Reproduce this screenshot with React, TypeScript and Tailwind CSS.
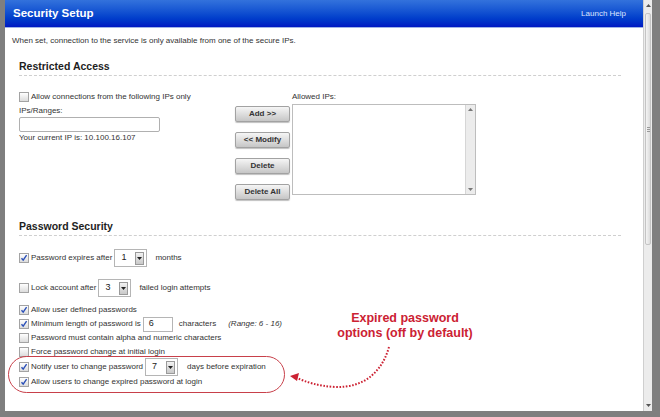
import React from "react";

const font = "font-['Liberation_Sans',Arial,sans-serif]";

function Check({checked}: {checked?: boolean}) {
  return (
    <span className="relative flex h-[10px] w-[10px] shrink-0 items-center justify-center border border-[#a3a3a3] bg-linear-to-b from-[#ffffff] to-[#dcdcdc]">
      {checked && (
        <svg width="8" height="8" viewBox="0 0 8 8" className="absolute">
          <path d="M1.5 4.2 L3.2 6.2 L6.6 1.2" fill="none" stroke="#2a4fb8" strokeWidth="1.4" />
        </svg>
      )}
    </span>
  );
}

function Select({value, w = 33}: {value: string; w?: number}) {
  return (
    <span
      className="flex h-[18px] items-center justify-between border border-[#b5b5b5] bg-white pl-[6px] pr-[2px] text-[9px] text-[#222]"
      style={{width: w}}>
      {value}
      <span className="flex h-[13px] w-[9px] items-center justify-center border border-[#9a9a9a] bg-linear-to-b from-[#f2f2f2] to-[#c9c9c9]">
        <svg width="5" height="3" viewBox="0 0 5 3">
          <path d="M0 0 H5 L2.5 3 Z" fill="#222" />
        </svg>
      </span>
    </span>
  );
}

function Row({checked, h = 14, children}: {checked?: boolean; h?: number; children: React.ReactNode}) {
  return (
    <div className="flex items-center" style={{height: h}}>
      <Check checked={checked} />
      <div className="ml-[2px] flex items-center">{children}</div>
    </div>
  );
}

function Btn({label}: {label: string}) {
  return (
    <button className="h-[16px] w-[55px] rounded-[2px] border border-[#a2a2a2] bg-linear-to-b from-[#f6f6f6] to-[#c6c6c6] text-[8px] font-bold text-[#333] shadow-[0_1px_1px_rgba(0,0,0,0.25)]">
      {label}
    </button>
  );
}

function Heading({children}: {children: React.ReactNode}) {
  return (
    <div className="flex h-[16px] items-center border-b border-dashed border-[#cfcfcf] pb-[2px] text-[10.5px] font-bold text-[#1e1e1e]">
      {children}
    </div>
  );
}

export default function App() {
  return (
    <div className={`${font} relative flex h-[417px] w-[660px] overflow-hidden bg-[#7f7f7f] pb-[6px] pl-[5px] pr-[8px] text-[8px] text-[#333]`}>
      <div className="flex w-[638px] flex-col">
        <div className="flex h-[28px] items-center justify-between border-b border-[#9fb3e6] bg-linear-to-b from-[#3372dc] to-[#0016c2] pl-[8px] pr-[17px]">
          <span className="text-[11.5px] font-bold text-white">Security Setup</span>
          <span className="text-[8px] text-[#dde6ff]">Launch Help</span>
        </div>

        <div className="flex-1 bg-white">
          <div className="ml-[7px] mt-[6px] flex h-[14px] items-center">
            When set, connection to the service is only available from one of the secure IPs.
          </div>

          <div className="ml-[14px] mr-[22px]">
            <div className="mt-[12px]">
              <Heading>Restricted Access</Heading>
            </div>

            <div className="mt-[14px] flex">
              <div className="w-[216px]">
                <Row>Allow connections from the following IPs only</Row>
                <div className="mt-[1px] flex h-[12px] items-center">IPs/Ranges:</div>
                <div className="h-[15px] w-[141px] rounded-[2px] border border-[#b0b0b0] bg-white" />
                <div className="flex h-[12px] items-center">Your current IP is: 10.100.16.107</div>
              </div>

              <div className="mt-[16px] flex flex-col gap-[10px]">
                <Btn label="Add >>" />
                <Btn label="<< Modify" />
                <Btn label="Delete" />
                <Btn label="Delete All" />
              </div>

              <div className="ml-[2px]">
                <div className="flex h-[14px] items-center">Allowed IPs:</div>
                <div className="flex h-[91px] w-[184px] justify-end border border-[#bdbdbd] bg-white">
                  <div className="flex w-[10px] flex-col items-center justify-between border-l border-[#d6d6d6] bg-[#ececec] py-[3px]">
                    <svg width="5" height="3" viewBox="0 0 5 3">
                      <path d="M0 3 H5 L2.5 0 Z" fill="#777" />
                    </svg>
                    <svg width="5" height="3" viewBox="0 0 5 3">
                      <path d="M0 0 H5 L2.5 3 Z" fill="#777" />
                    </svg>
                  </div>
                </div>
              </div>
            </div>

            <div className="mt-[20px]">
              <Heading>Password Security</Heading>
            </div>

            <div className="mt-[13px]">
              <Row checked h={18}>
                Password expires after
                <span className="ml-[2px]">
                  <Select value="1" />
                </span>
                <span className="ml-[8px]">months</span>
              </Row>
            </div>
            <div className="mt-[12px]">
              <Row h={18}>
                Lock account after
                <span className="ml-[2px]">
                  <Select value="3" />
                </span>
                <span className="ml-[8px]">failed login attempts</span>
              </Row>
            </div>
            <div className="mt-[6px]">
              <Row checked>Allow user defined passwords</Row>
              <Row checked>
                Minimum length of password is
                <span className="ml-[2px] flex h-[15px] w-[30px] items-center border border-[#b5b5b5] bg-white pl-[5px] text-[9px] text-[#222]">
                  6
                </span>
                <span className="ml-[6px]">characters</span>
                <span className="ml-[12px] italic">(Range: 6 - 16)</span>
              </Row>
              <Row>Password must contain alpha and numeric characters</Row>
              <Row>Force password change at initial login</Row>
              <Row checked h={16}>
                Notify user to change password
                <span className="ml-[2px]">
                  <Select value="7" />
                </span>
                <span className="ml-[9px]">days before expiration</span>
              </Row>
              <Row checked>Allow users to change expired password at login</Row>
            </div>
          </div>
        </div>
      </div>

      <div className="relative flex w-[9px] flex-col items-center justify-between border-l border-[#cfcfcf] bg-[#ececec] py-[4px]">
        <svg width="5" height="3" viewBox="0 0 5 3">
          <path d="M0 3 H5 L2.5 0 Z" fill="#555" />
        </svg>
        <div className="absolute left-[1px] top-[13px] flex h-[232px] w-[6px] items-center justify-center rounded-[2px] border border-[#c4c4c4] bg-linear-to-r from-[#f4f4f4] to-[#dcdcdc]">
          <div className="flex flex-col gap-[1px]">
            <div className="h-px w-[3px] bg-[#999]" />
            <div className="h-px w-[3px] bg-[#999]" />
            <div className="h-px w-[3px] bg-[#999]" />
          </div>
        </div>
        <svg width="5" height="3" viewBox="0 0 5 3">
          <path d="M0 0 H5 L2.5 3 Z" fill="#555" />
        </svg>
      </div>

      {/* annotation */}
      <div className="absolute left-[8px] top-[356px] h-[37px] w-[277px] rounded-full border-[1.5px] border-[#c8404a]" />
      <div className="absolute left-[330px] top-[311px] w-[150px] text-center text-[12.5px] font-bold leading-[15px] text-[#cc2233]">
        Expired password
        <br />
        options (off by default)
      </div>
      <svg className="absolute left-0 top-0" width="660" height="417" viewBox="0 0 660 417">
        <path
          d="M389 347 C382 372, 364 388, 335 387 C318 386, 306 382, 297 378"
          fill="none"
          stroke="#cc2233"
          strokeWidth="2"
          strokeDasharray="1.6 1.6"
        />
        <path d="M290 376 L299 373 L297 381 Z" fill="#cc2233" />
      </svg>
    </div>
  );
}
